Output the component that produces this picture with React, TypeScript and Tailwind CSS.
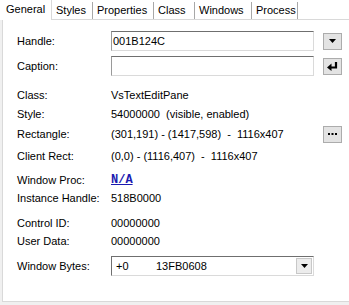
import React from "react";

const tabs = [
  { label: "Styles", w: "w-[41px]" },
  { label: "Properties", w: "w-[61px]" },
  { label: "Class", w: "w-[41px]" },
  { label: "Windows", w: "w-[57px]" },
  { label: "Process", w: "w-[46px]" },
];

function DownArrow() {
  return (
    <svg width="7" height="4" viewBox="0 0 7 4">
      <polygon points="0,0 7,0 3.5,4" fill="#000" />
    </svg>
  );
}

function SmallButton({ children }: { children: React.ReactNode }) {
  return (
    <div className="ml-[9px] flex h-[17px] w-[19px] items-center justify-center border border-[#acacac] bg-[#e3e3e3]">
      {children}
    </div>
  );
}

function TextBox({ value }: { value?: string }) {
  return (
    <div className="flex h-[20px] w-[203px] items-center border border-[#dadada] border-l-[#9a9a9a] border-t-[#6f6f6f] bg-white pl-[1px]">
      {value}
    </div>
  );
}

function Row({ label, top, h = "h-[18px]", children }: { label: string; top: string; h?: string; children: React.ReactNode }) {
  return (
    <div className={`flex items-center ${top} ${h}`}>
      <div className="w-[94px] shrink-0">{label}</div>
      {children}
    </div>
  );
}

export default function App() {
  return (
    <div className="h-[305px] w-[349px] overflow-hidden bg-[#f0f0f0] font-['Liberation_Sans',Arial,sans-serif] text-[11px] leading-none text-black">
      <div className="flex h-[19px] items-end bg-white">
        <div className="relative z-10 -mb-px h-[20px] w-[52px] border-r border-[#d9d9d9] bg-white pl-[6px] pt-[4px]">General</div>
        {tabs.map((t) => (
          <div key={t.label} className={`flex h-[17px] ${t.w} items-start border-r border-[#a8a8a8] bg-white pl-[4px] pt-[3px]`}>
            {t.label}
          </div>
        ))}
      </div>
      <div className="ml-[2px] h-[283px] border border-r-0 border-[#d9d9d9] bg-white pl-[14px] pt-[11px]">
        <Row label="Handle:" top="" h="h-[20px]">
          <TextBox value="001B124C" />
          <SmallButton>
            <DownArrow />
          </SmallButton>
        </Row>
        <Row label="Caption:" top="mt-[5px]" h="h-[20px]">
          <TextBox />
          <SmallButton>
            <svg width="11" height="9" viewBox="0 0 11 9">
              <path d="M9 0 V5.5 H4" stroke="#000" strokeWidth="2.2" fill="none" />
              <polygon points="0,5.5 4.5,1.5 4.5,9" fill="#000" />
            </svg>
          </SmallButton>
        </Row>
        <Row label="Class:" top="mt-[10px]">
          <span>VsTextEditPane</span>
        </Row>
        <Row label="Style:" top="mt-[1px]">
          <span className="whitespace-pre">54000000  (visible, enabled)</span>
        </Row>
        <Row label="Rectangle:" top="mt-[2px]">
          <span className="w-[203px] whitespace-pre">(301,191) - (1417,598)  -  1116x407</span>
          <SmallButton>
            <svg width="9" height="2" viewBox="0 0 9 2">
              <rect x="0" y="0" width="2" height="2" fill="#000" />
              <rect x="3.5" y="0" width="2" height="2" fill="#000" />
              <rect x="7" y="0" width="2" height="2" fill="#000" />
            </svg>
          </SmallButton>
        </Row>
        <Row label="Client Rect:" top="mt-[4px]">
          <span className="whitespace-pre">(0,0) - (1116,407)  -  1116x407</span>
        </Row>
        <Row label="Window Proc:" top="mt-[6px]">
          <span className="font-['Liberation_Mono',monospace] text-[12px] font-bold text-[#1a1ab0] underline">N/A</span>
        </Row>
        <Row label="Instance Handle:" top="">
          <span>518B0000</span>
        </Row>
        <Row label="Control ID:" top="mt-[7px]">
          <span>00000000</span>
        </Row>
        <Row label="User Data:" top="">
          <span>00000000</span>
        </Row>
        <Row label="Window Bytes:" top="mt-[6px]" h="h-[20px]">
          <div className="flex h-[20px] w-[203px] items-center border border-[#dadada] border-l-[#6f6f6f] border-t-[#6f6f6f] bg-white pl-[4px] pr-[1px]">
            <span className="w-[40px]">+0</span>
            <span className="flex-1">13FB0608</span>
            <div className="flex h-[16px] w-[16px] items-center justify-center border border-[#c8c8c8] bg-[#ececec]">
              <DownArrow />
            </div>
          </div>
        </Row>
      </div>
    </div>
  );
}
